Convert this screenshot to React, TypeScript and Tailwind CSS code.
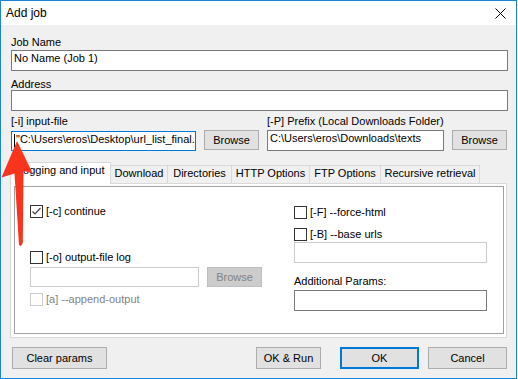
import React from 'react';

const Check: React.FC<{ checked?: boolean; disabled?: boolean }> = ({ checked, disabled }) => (
  <span
    className={`w-[13px] h-[13px] shrink-0 border bg-white flex items-center justify-center ${
      disabled ? 'border-[#cccccc]' : 'border-[#333333]'
    }`}
  >
    {checked && (
      <svg width="11" height="11" viewBox="0 0 11 11">
        <polyline points="1.5,5.5 4,8 9.5,2" fill="none" stroke="#444444" strokeWidth="1.2" />
      </svg>
    )}
  </span>
);

const CheckRow: React.FC<{ label: string; checked?: boolean; disabled?: boolean; className?: string }> = ({
  label,
  checked,
  disabled,
  className = '',
}) => (
  <div className={`flex items-center gap-[3px] h-[13px] ${className}`}>
    <Check checked={checked} disabled={disabled} />
    <span className={`leading-[13px] whitespace-nowrap ${disabled ? 'text-[#838383]' : ''}`}>{label}</span>
  </div>
);

const Btn: React.FC<{ label: string; className?: string; primary?: boolean; disabled?: boolean }> = ({
  label,
  className = '',
  primary,
  disabled,
}) => (
  <div
    className={`flex items-center justify-center whitespace-nowrap leading-[13px] ${
      primary
        ? 'border-2 border-[#0078d7] bg-[#e1e1e1]'
        : disabled
        ? 'border border-[#bfbfbf] bg-[#cccccc] text-[#838383]'
        : 'border border-[#adadad] bg-[#e1e1e1]'
    } ${className}`}
  >
    {label}
  </div>
);

const Field: React.FC<{ value?: string; className?: string; disabled?: boolean }> = ({ value = '', className = '', disabled }) => (
  <div
    className={`bg-white border ${disabled ? 'border-[#cccccc]' : 'border-[#7a7a7a]'} pl-[2px] leading-[14px] whitespace-nowrap overflow-hidden ${className}`}
  >
    {value}
  </div>
);

const tabs = [
  { label: 'Download', w: 'w-[57px]' },
  { label: 'Directories', w: 'w-[64px]' },
  { label: 'HTTP Options', w: 'w-[78px]' },
  { label: 'FTP Options', w: 'w-[71px]' },
  { label: 'Recursive retrieval', w: 'w-[99px]' },
];

export default function App() {
  return (
    <div className="relative w-[518px] h-[379px] bg-white text-[11px] text-black font-['Liberation_Sans',Arial,sans-serif]">
      <div className="w-[517px] h-[379px] border border-[#1883d7] bg-[#f0f0f0] flex flex-col">
        {/* title bar */}
        <div className="h-[24px] bg-white flex items-center justify-between pl-[5px] pr-[10px] shrink-0">
          <span className="text-[12px] leading-[14px]">Add job</span>
          <svg width="11" height="11" viewBox="0 0 11 11">
            <path d="M0.5 0.5 L10.5 10.5 M10.5 0.5 L0.5 10.5" stroke="#000" strokeWidth="1" />
          </svg>
        </div>

        {/* body */}
        <div className="flex flex-col">
          <div className="mt-[11px] ml-[10px] h-[12px] leading-[12px]">Job Name</div>
          <Field value="No Name (Job 1)" className="mt-[2px] ml-[10px] w-[497px] h-[21px]" />

          <div className="mt-[7px] ml-[10px] h-[12px] leading-[12px]">Address</div>
          <Field className="ml-[10px] w-[497px] h-[21px]" />

          <div className="mt-[4px] ml-[10px] flex h-[12px] leading-[12px]">
            <span className="w-[256px]">[-i] input-file</span>
            <span>[-P] Prefix (Local Downloads Folder)</span>
          </div>

          <div className="mt-[3px] ml-[10px] flex items-start gap-[8px]">
            <div className="w-[185px] h-[20px] mt-[1px] bg-white border border-[#0078d7] pl-[2px] leading-[14px] whitespace-nowrap overflow-hidden flex items-start">
              <span className="w-px h-[13px] bg-black mt-[2px] mr-px" />
              <span>"C:\Users\eros\Desktop\url_list_final.</span>
            </div>
            <Btn label="Browse" className="w-[55px] h-[20px]" />
            <Field value="C:\Users\eros\Downloads\texts" className="w-[177px] h-[21px]" />
            <Btn label="Browse" className="w-[55px] h-[20px]" />
          </div>

          {/* tabs */}
          <div className="mt-[11px] ml-[9px] h-[21px] flex items-end">
            <div className="relative z-10 w-[101px] h-[22px] -mb-px bg-white border border-b-0 border-[#d9d9d9] pl-[6px] pt-[1px] leading-[12px]">
              Logging and input
            </div>
            {tabs.map((t) => (
              <div
                key={t.label}
                className={`${t.w} h-[18px] bg-[#f0f0f0] border-t border-r border-[#d9d9d9] pt-[1px] text-center leading-[12px] whitespace-nowrap`}
              >
                {t.label}
              </div>
            ))}
          </div>

          <div className="ml-[9px] w-[497px] h-[155px] bg-white border border-[#d9d9d9] pt-[2px] pl-[3px] pr-[2px] pb-[3px]">
            <div className="h-full border border-[#a0a0a0] flex pl-[15px]">
              <div className="w-[264px] flex flex-col">
                <CheckRow label="[-c] continue" checked className="mt-[18px]" />
                <CheckRow label="[-o] output-file log" className="mt-[33px]" />
                <div className="mt-[3px] flex gap-[8px]">
                  <Field disabled className="w-[169px] h-[20px]" />
                  <Btn label="Browse" disabled className="w-[55px] h-[20px]" />
                </div>
                <CheckRow label="[a] --append-output" disabled className="mt-[6px]" />
              </div>
              <div className="flex flex-col">
                <CheckRow label="[-F] --force-html" className="mt-[19px]" />
                <CheckRow label="[-B] --base urls" className="mt-[9px]" />
                <Field disabled className="mt-[1px] w-[193px] h-[21px]" />
                <div className="mt-[12px] h-[12px] leading-[12px]">Additional Params:</div>
                <Field className="mt-[3px] w-[193px] h-[21px]" />
              </div>
            </div>
          </div>

          {/* footer */}
          <div className="mt-[9px] flex items-start justify-between pl-[11px] pr-[9px]">
            <Btn label="Clear params" className="w-[95px] h-[22px]" />
            <div className="flex items-start">
              <Btn label="OK & Run" className="w-[65px] h-[22px]" />
              <Btn label="OK" primary className="ml-[19px] w-[79px] h-[22px]" />
              <Btn label="Cancel" className="ml-[9px] w-[79px] h-[22px]" />
            </div>
          </div>
        </div>
      </div>

      {/* annotation arrow */}
      <svg className="absolute left-0 top-0 z-20 pointer-events-none" width="40" height="250" viewBox="0 0 40 250">
        <polygon
          points="17,141 32.5,173 23.5,171 22.8,243 21,246 19,245 14.5,173.5 1.5,177.5"
          fill="#f9341c"
          strokeLinejoin="round"
        />
      </svg>
    </div>
  );
}
